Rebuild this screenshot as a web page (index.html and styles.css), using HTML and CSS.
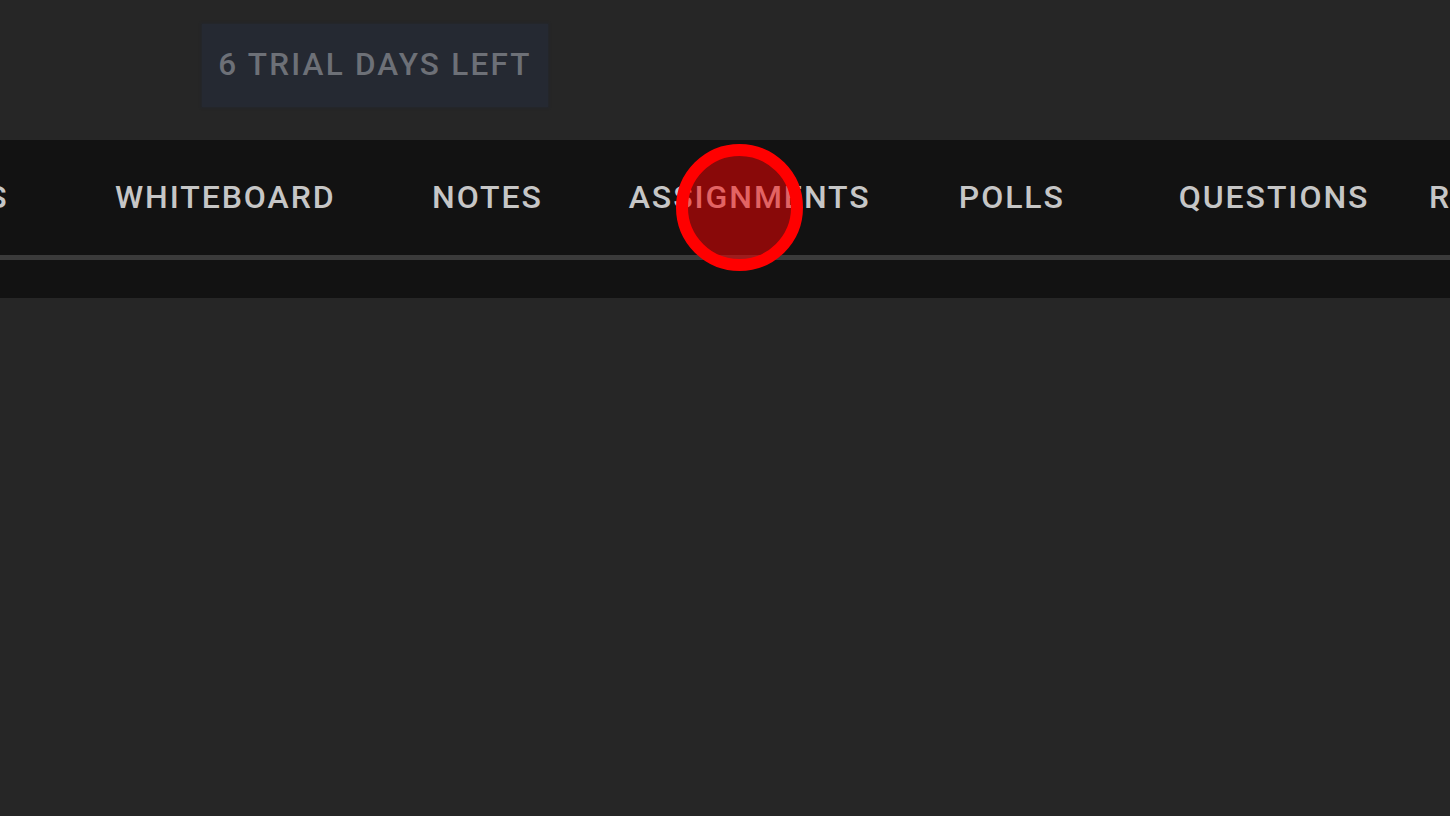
FILE: index.html
```html
<!DOCTYPE html>
<html>
<head>
<meta charset="utf-8">
<link rel="stylesheet" href="styles.css">
</head>
<body>
<header class="top">
  <div class="trial">6 TRIAL DAYS LEFT</div>
</header>
<nav class="tabbar">
  <div class="tabs">
    <div class="tab">FILES</div>
    <div class="tab">WHITEBOARD</div>
    <div class="tab">NOTES</div>
    <div class="tab tab-marked">ASSIGNMENTS<span class="tap"></span></div>
    <div class="tab">POLLS</div>
    <div class="tab">QUESTIONS</div>
    <div class="tab">RECORDINGS</div>
  </div>
  <div class="underline"></div>
  <div class="subbar"></div>
</nav>
<main class="content"></main>
</body>
</html>
```

FILE: styles.css
```css
html, body {
  margin: 0;
  padding: 0;
  background: #262626;
  width: 1450px;
  height: 816px;
  overflow: hidden;
  font-family: Roboto, "Liberation Sans", sans-serif;
}

.top {
  height: 140px;
  box-sizing: border-box;
  padding: 24px 0 0 202px;
}

.trial {
  display: inline-flex;
  align-items: center;
  justify-content: center;
  width: 346px;
  height: 83px;
  box-sizing: border-box;
  padding-bottom: 3px;
  background: #252932;
  box-shadow: 0 0 2px 1px #24272d;
  color: #6d7077;
  font-size: 31.5px;
  font-weight: 500;
  letter-spacing: 2.2px;
}

.tabbar {
  height: 158px;
  background: #121212;
  overflow: hidden;
}

.tabs {
  display: flex;
  height: 115px;
  margin-left: -168px;
}

.tab {
  flex: 0 0 262.2px;
  display: flex;
  align-items: center;
  justify-content: center;
  color: #c6c6c6;
  font-size: 32px;
  font-weight: 500;
  letter-spacing: 1.95px;
  position: relative;
  white-space: nowrap;
  box-sizing: border-box;
  padding-bottom: 2px;
}

.tap {
  position: absolute;
  left: 50%;
  top: 4px;
  width: 127px;
  height: 127px;
  margin-left: -74px;
  box-sizing: border-box;
  border: 12px solid #ff0000;
  border-radius: 50%;
  background: rgba(255, 0, 0, 0.5);
}

.underline {
  height: 5px;
  background: #3a3a3a;
}

.subbar {
  height: 38px;
}

.content {
  height: 518px;
}
```
